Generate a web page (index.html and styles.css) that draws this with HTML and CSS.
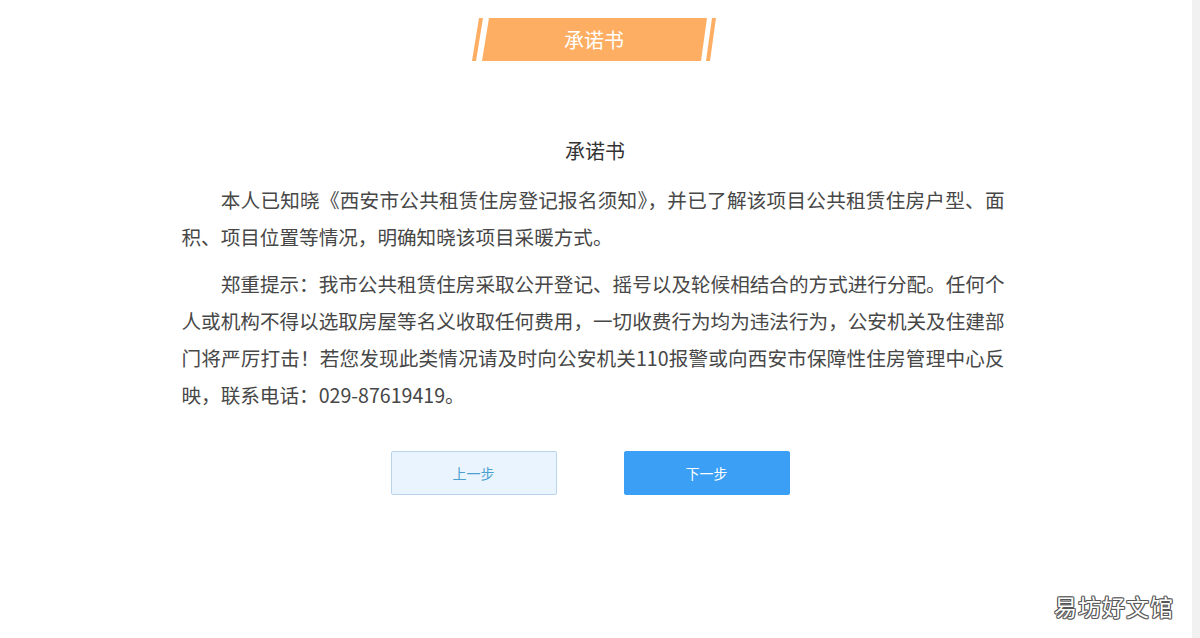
FILE: index.html
```html
<!DOCTYPE html>
<html lang="zh-CN">
<head>
<meta charset="utf-8">
<title>承诺书</title>
<link rel="stylesheet" href="styles.css">
</head>
<body>
<div class="page">
  <main class="main">
    <div class="banner">
      <svg class="banner-bg" width="250" height="44" viewBox="0 0 250 44" aria-hidden="true">
        <polygon points="8,0 12,0 5,43 1,43" fill="#fdae62"/>
        <polygon points="18,0 236,0 230,43 11,43" fill="#fdae62"/>
        <polygon points="241,0 245,0 239,43 235,43" fill="#fdae62"/>
      </svg>
      <span class="banner-text">承诺书</span>
    </div>

    <section class="letter">
      <h2 class="letter-title">承诺书</h2>
      <p class="letter-para">本人已知晓《西安市公共租赁住房登记报名须知》，并已了解该项目公共租赁住房户型、面积、项目位置等情况，明确知晓该项目采暖方式。</p>
      <p class="letter-para">郑重提示：我市公共租赁住房采取公开登记、摇号以及轮候相结合的方式进行分配。任何个人或机构不得以选取房屋等名义收取任何费用，一切收费行为均为违法行为，公安机关及住建部门将严厉打击！若您发现此类情况请及时向公安机关110报警或向西安市保障性住房管理中心反映，联系电话：029-87619419。</p>
    </section>

    <div class="actions">
      <button class="btn btn-prev" type="button">上一步</button>
      <button class="btn btn-next" type="button">下一步</button>
    </div>

    <div class="watermark">易坊好文馆</div>
  </main>
  <div class="scrollbar"></div>
</div>
</body>
</html>
```

FILE: styles.css
```css
* { box-sizing: border-box; }

html, body {
  margin: 0;
  padding: 0;
  background: #ffffff;
  font-family: "Noto Sans CJK SC", "Noto Sans", sans-serif;
}

.page {
  display: flex;
  width: 1200px;
  height: 638px;
  overflow: hidden;
}

.main {
  flex: 1;
  position: relative;
  padding-top: 18px;
}

.scrollbar {
  width: 8px;
  background: #f1f1f1;
}

.banner {
  position: relative;
  width: 250px;
  height: 44px;
  margin: 0 auto;
  display: flex;
  align-items: center;
  justify-content: center;
  left: 0;
}

.banner-bg {
  position: absolute;
  left: 0;
  top: 0;
}

.banner-text {
  position: relative;
  color: #ffffff;
  font-size: 20px;
  line-height: 44px;
  margin-top: -1px;
  margin-left: -4px;
}

.letter {
  width: 823px;
  margin: 71px auto 0;
  position: relative;
  left: -3px;
  color: #474747;
}

.letter-title {
  margin: 0 0 12px;
  text-align: center;
  font-size: 20px;
  font-weight: normal;
  line-height: 36px;
  color: #333333;
  padding-left: 4px;
}

.letter-para {
  margin: 0 0 10px;
  font-size: 19.6px;
  line-height: 37px;
  text-indent: 2em;
  text-align: justify;
}

.actions {
  display: flex;
  justify-content: center;
  gap: 67px;
  margin-top: 38px;
  position: relative;
  left: -6px;
}

.btn {
  width: 166px;
  height: 44px;
  border-radius: 2px;
  font-family: inherit;
  font-size: 14px;
  cursor: pointer;
}

.btn-prev {
  background: #eaf4fe;
  border: 1px solid #b9d5ee;
  color: #4a9fcf;
}

.btn-next {
  background: #3a9ff5;
  border: 1px solid #3a9ff5;
  color: #ffffff;
}

.watermark {
  position: absolute;
  right: 18px;
  top: 588px;
  font-size: 23px;
  line-height: 36px;
  color: #ffffff;
  letter-spacing: 1px;
  text-shadow:
    1px 0 0 #555, -1px 0 0 #555, 0 1px 0 #555, 0 -1px 0 #555,
    1px 1px 0 #777, -1px -1px 0 #777, 1px -1px 0 #777, -1px 1px 0 #777;
}
```
